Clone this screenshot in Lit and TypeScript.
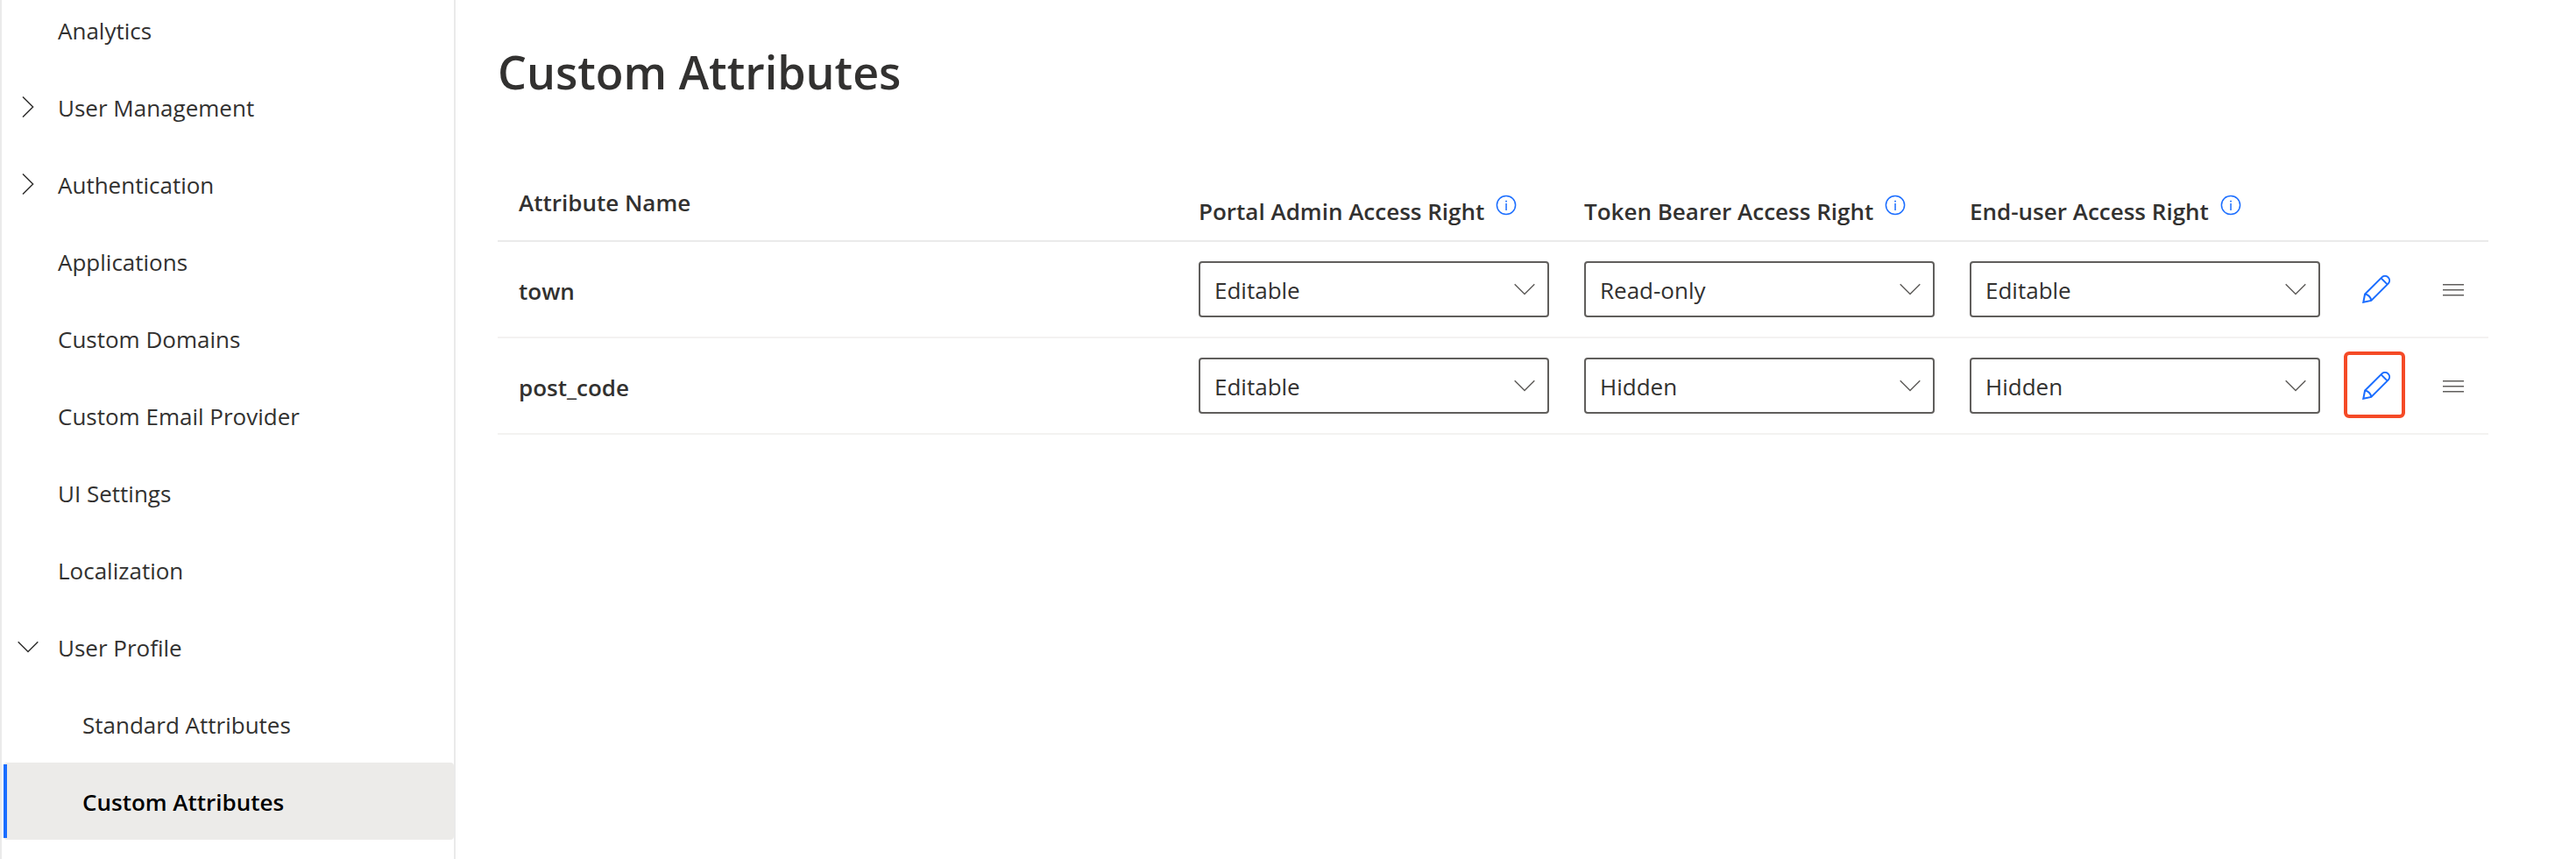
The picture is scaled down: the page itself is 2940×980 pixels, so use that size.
import { LitElement, html, css, svg, nothing } from "lit";
import { customElement, property, state } from "lit/decorators.js";
import { classMap } from "lit/directives/class-map.js";

interface NavItem {
  label: string;
  expanded?: boolean;
  children?: string[];
}

interface AttributeRow {
  name: string;
  rights: string[];
  highlighted?: boolean;
}

const NAV: NavItem[] = [
  { label: "Analytics" },
  { label: "User Management", expanded: false },
  { label: "Authentication", expanded: false },
  { label: "Applications" },
  { label: "Custom Domains" },
  { label: "Custom Email Provider" },
  { label: "UI Settings" },
  { label: "Localization" },
  {
    label: "User Profile",
    expanded: true,
    children: ["Standard Attributes", "Custom Attributes"],
  },
];

const RIGHT_COLUMNS = [
  "Portal Admin Access Right",
  "Token Bearer Access Right",
  "End-user Access Right",
];

const OPTIONS = ["Hidden", "Read-only", "Editable"];

const chevronDown = svg`<path d="M0.7 0.7 L12 12 L23.3 0.7" transform="translate(0 5.5)" fill="none" stroke="currentColor" stroke-width="1.5"/>`;
const chevronRight = svg`<path d="M6 0.5 L17.6 12 L6 23.5" fill="none" stroke="currentColor" stroke-width="1.5"/>`;

@customElement("side-nav")
export class SideNav extends LitElement {
  @property() current = "Custom Attributes";

  static styles = css`
    :host {
      display: block;
      box-sizing: border-box;
      border: solid #eaeaea;
      border-width: 0 2px;
      overflow: hidden;
    }
    .list {
      list-style: none;
      margin: 0;
      padding: 0;
    }
    .root {
      margin-top: -10px;
    }
    .row {
      display: flex;
      align-items: center;
      height: 88px;
      box-sizing: border-box;
      padding-left: 16px;
      color: #323130;
    }
    .toggle {
      display: flex;
      align-items: center;
      justify-content: center;
      width: 28px;
      height: 28px;
      margin: 0;
      padding: 0;
      border: 0;
      background: none;
      color: inherit;
    }
    .toggle + .link {
      padding-left: 20px;
    }
    .link {
      flex: 1;
      padding-top: 2px;
      padding-left: 48px;
      color: inherit;
      font-size: 26px;
      line-height: 36px;
      text-decoration: none;
    }
    .child {
      padding-left: 44px;
    }
    .active {
      margin-left: 2px;
      padding: 2px 0;
      border-radius: 4px;
      background: #ecebe9;
      color: #000;
      font-weight: 600;
    }
    .active .link {
      display: flex;
      align-items: center;
      align-self: stretch;
      padding-left: 86px;
      border-left: 4px solid #1a6dff;
    }
  `;

  private renderChild(label: string) {
    const active = label === this.current;
    return html`<li>
      <div class=${classMap({ row: true, child: true, active })}>
        <a class="link" href="#" aria-current=${active ? "page" : nothing}>${label}</a>
      </div>
    </li>`;
  }

  render() {
    return html`<nav aria-label="Main">
      <ul class="list root">
        ${NAV.map(
          (item) => html`<li>
            <div class="row">
              ${item.expanded === undefined
                ? nothing
                : html`<button
                    class="toggle"
                    type="button"
                    aria-label=${`Toggle ${item.label}`}
                    aria-expanded=${item.expanded ? "true" : "false"}
                  >
                    <svg width="24" height="24" viewBox="0 0 24 24" aria-hidden="true">
                      ${item.expanded ? chevronDown : chevronRight}
                    </svg>
                  </button>`}
              <a class="link" href="#">${item.label}</a>
            </div>
            ${item.children
              ? html`<ul class="list">
                  ${item.children.map((c) => this.renderChild(c))}
                </ul>`
              : nothing}
          </li>`
        )}
      </ul>
    </nav>`;
  }
}

@customElement("attribute-table")
export class AttributeTable extends LitElement {
  @state() private rows: AttributeRow[] = [
    { name: "town", rights: ["Editable", "Read-only", "Editable"] },
    { name: "post_code", rights: ["Editable", "Hidden", "Hidden"], highlighted: true },
  ];

  static styles = css`
    :host {
      display: block;
    }
    .table {
      width: 100%;
      border-collapse: separate;
      border-spacing: 0;
      table-layout: fixed;
    }
    .col-right {
      width: 440px;
    }
    .col-edit {
      width: 96px;
    }
    .col-drag {
      width: 80px;
    }
    .head,
    .name {
      color: #323130;
      font-size: 26px;
      font-weight: 600;
      line-height: 36px;
      text-align: left;
    }
    .head,
    .cell {
      box-sizing: border-box;
    }
    .head {
      height: 86px;
      padding: 0 24px 2px;
      border-bottom: 2px solid #eaeaea;
    }
    .head-right {
      padding: 18px 0 0 24px;
      white-space: nowrap;
    }
    .head-content {
      display: flex;
      align-items: center;
      gap: 12px;
    }
    .info {
      display: flex;
      width: 26px;
      height: 26px;
      margin: 0 0 14px;
      padding: 0;
      border: 0;
      background: none;
      color: #1a6dff;
    }
    .cell {
      height: 110px;
      border-bottom: 2px solid #f3f2f1;
    }
    .name {
      padding: 4px 24px 0;
    }
    .right {
      padding: 0 16px 0 24px;
    }
    .dropdown {
      display: grid;
      align-items: center;
      color: #605e5c;
    }
    .select,
    .caret {
      grid-area: 1 / 1;
    }
    .select {
      appearance: none;
      width: 100%;
      height: 64px;
      margin: 0;
      padding: 2px 56px 0 16px;
      border: 2px solid #605e5c;
      border-radius: 4px;
      background: #fff;
      color: #323130;
      font-family: inherit;
      font-size: 26px;
    }
    .caret {
      justify-self: end;
      margin-right: 16px;
      pointer-events: none;
    }
    .action {
      position: relative;
      padding: 0;
    }
    .icon-button {
      display: flex;
      margin: 0 auto;
      padding: 0;
      border: 0;
      background: none;
      color: #1a6dff;
    }
    .drag {
      color: #605e5c;
    }
    .marker {
      position: absolute;
      left: 11px;
      top: 15px;
      box-sizing: border-box;
      width: 70px;
      height: 76px;
      border: 4px solid #f54a26;
      border-radius: 6px;
      pointer-events: none;
    }
  `;

  private setRight(row: number, column: number, value: string) {
    this.rows = this.rows.map((r, i) =>
      i === row ? { ...r, rights: r.rights.map((v, j) => (j === column ? value : v)) } : r
    );
  }

  render() {
    return html`<table class="table">
      <colgroup>
        <col />
        ${RIGHT_COLUMNS.map(() => html`<col class="col-right" />`)}
        <col class="col-edit" />
        <col class="col-drag" />
      </colgroup>
      <thead>
        <tr>
          <th class="head" scope="col">Attribute Name</th>
          ${RIGHT_COLUMNS.map(
            (label) => html`<th class="head head-right" scope="col">
              <div class="head-content">
                <span>${label}</span>
                <button class="info" type="button" aria-label=${`About ${label}`}>
                  <svg width="26" height="26" viewBox="0 0 26 26" aria-hidden="true">
                    <circle cx="13" cy="13" r="10.6" fill="none" stroke="currentColor" stroke-width="1.5" />
                    <rect x="12.3" y="11" width="1.5" height="8" fill="currentColor" />
                    <rect x="12.2" y="7.8" width="1.7" height="1.7" fill="currentColor" />
                  </svg>
                </button>
              </div>
            </th>`
          )}
          <td class="head"></td>
          <td class="head"></td>
        </tr>
      </thead>
      <tbody>
        ${this.rows.map(
          (row, i) => html`<tr>
            <th class="cell name" scope="row">${row.name}</th>
            ${row.rights.map(
              (value, j) => html`<td class="cell right">
                <div class="dropdown">
                  <select
                    class="select"
                    aria-label=${`${RIGHT_COLUMNS[j]} for ${row.name}`}
                    @change=${(e: Event) => this.setRight(i, j, (e.target as HTMLSelectElement).value)}
                  >
                    ${OPTIONS.map((o) => html`<option value=${o} ?selected=${o === value}>${o}</option>`)}
                  </select>
                  <svg class="caret" width="24" height="24" viewBox="0 0 24 24" aria-hidden="true">
                    ${chevronDown}
                  </svg>
                </div>
              </td>`
            )}
            <td class="cell action">
              <button class="icon-button" type="button" aria-label=${`Edit ${row.name}`}>
                <svg width="32" height="32" viewBox="0 0 32 32" fill="none" stroke="currentColor" stroke-width="2" aria-hidden="true">
                  <path d="M1.3 30.8 L3.1 21.6 L22.4 2.4 A5 5 0 0 1 29.6 9.6 L10.3 28.9 Z" />
                  <path d="M3.1 21.6 C7 22.4 9.6 25 10.3 28.9" />
                  <path d="M21.6 3.4 L28.6 10.4" />
                </svg>
              </button>
              ${row.highlighted ? html`<span class="marker"></span>` : nothing}
            </td>
            <td class="cell action">
              <button class="icon-button drag" type="button" aria-label=${`Reorder ${row.name}`}>
                <svg width="24" height="16" viewBox="0 0 24 16" fill="none" stroke="currentColor" stroke-width="1.5" aria-hidden="true">
                  <path d="M0 2.8 H24 M0 8.8 H24 M0 14.8 H24" />
                </svg>
              </button>
            </td>
          </tr>`
        )}
      </tbody>
    </table>`;
  }
}

@customElement("app-root")
export class AppRoot extends LitElement {
  static styles = css`
    :host {
      display: grid;
      grid-template-columns: 520px minmax(0, 1fr);
      min-height: 100vh;
      background: #fff;
      color: #323130;
      font-family: "Open Sans", "Noto Sans", sans-serif;
    }
    .content {
      padding: 46px 100px 48px 48px;
    }
    .title {
      margin: 0 0 72px;
      font-size: 52px;
      font-weight: 600;
      line-height: 72px;
    }
  `;

  render() {
    return html`
      <side-nav></side-nav>
      <main class="content">
        <h1 class="title">Custom Attributes</h1>
        <attribute-table></attribute-table>
      </main>
    `;
  }
}
